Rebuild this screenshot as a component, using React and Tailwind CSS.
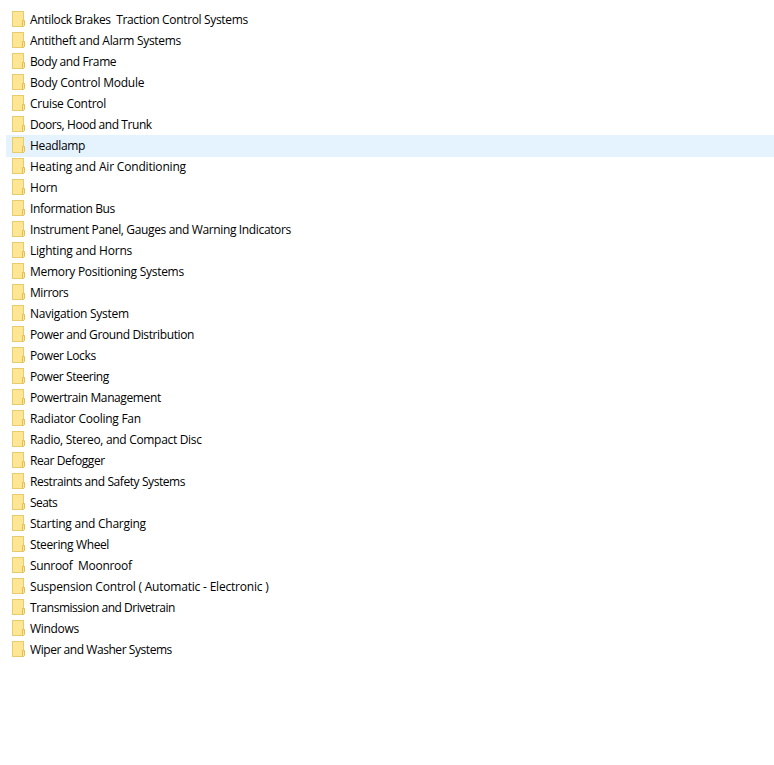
import React from "react";

// spacing is the letter spacing in px, tuned per label
const folders = [
  { name: "Antilock Brakes  Traction Control Systems", spacing: -0.34 },
  { name: "Antitheft and Alarm Systems", spacing: -0.3 },
  { name: "Body and Frame", spacing: -0.38 },
  { name: "Body Control Module", spacing: -0.23 },
  { name: "Cruise Control", spacing: -0.29 },
  { name: "Doors, Hood and Trunk", spacing: -0.43 },
  { name: "Headlamp", spacing: -0.33, active: true },
  { name: "Heating and Air Conditioning", spacing: -0.18 },
  { name: "Horn", spacing: -0.2 },
  { name: "Information Bus", spacing: -0.37 },
  { name: "Instrument Panel, Gauges and Warning Indicators", spacing: -0.36 },
  { name: "Lighting and Horns", spacing: -0.22 },
  { name: "Memory Positioning Systems", spacing: -0.28 },
  { name: "Mirrors", spacing: -0.45 },
  { name: "Navigation System", spacing: -0.26 },
  { name: "Power and Ground Distribution", spacing: -0.39 },
  { name: "Power Locks", spacing: -0.36 },
  { name: "Power Steering", spacing: -0.41 },
  { name: "Powertrain Management", spacing: -0.39 },
  { name: "Radiator Cooling Fan", spacing: -0.25 },
  { name: "Radio, Stereo, and Compact Disc", spacing: -0.31 },
  { name: "Rear Defogger", spacing: -0.42 },
  { name: "Restraints and Safety Systems", spacing: -0.42 },
  { name: "Seats", spacing: -0.55 },
  { name: "Starting and Charging", spacing: -0.25 },
  { name: "Steering Wheel", spacing: -0.37 },
  { name: "Sunroof  Moonroof", spacing: -0.31 },
  { name: "Suspension Control ( Automatic - Electronic )", spacing: -0.2 },
  { name: "Transmission and Drivetrain", spacing: -0.47 },
  { name: "Windows", spacing: -0.3 },
  { name: "Wiper and Washer Systems", spacing: -0.44 },
];

function FolderIcon() {
  return (
    <svg className="w-[13px] h-4 mb-0.5 shrink-0" viewBox="0 0 13 16" fill="none">
      <rect x="0.5" y="0.5" width="11" height="15" fill="#ffe694" stroke="#e8cb6c" />
      <path d="M10.5 15.5V9.5h2v5l-1 1z" fill="#ffe694" stroke="#e3bf55" />
    </svg>
  );
}

export default function App() {
  return (
    <div className="min-h-screen bg-white pt-[9px] pl-[6px] overflow-hidden">
      <ul>
        {folders.map((folder) => (
          <li
            key={folder.name}
            className={`flex items-center h-[22px] -mb-px pl-[6px] gap-[5px] ${
              folder.active ? "bg-[#e5f3ff]" : ""
            }`}
          >
            <FolderIcon />
            <span
              className="whitespace-pre text-black text-[12px] leading-[22px] font-['Open_Sans','Noto_Sans',sans-serif]"
              style={{ letterSpacing: `${folder.spacing}px` }}
            >
              {folder.name}
            </span>
          </li>
        ))}
      </ul>
    </div>
  );
}
